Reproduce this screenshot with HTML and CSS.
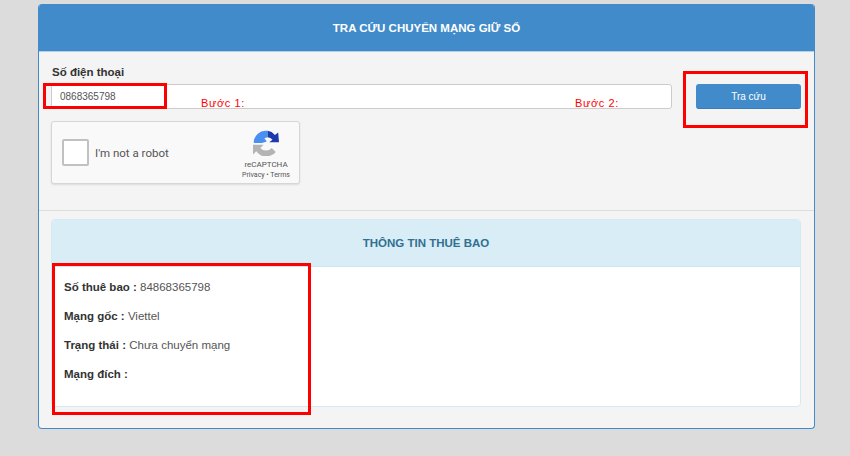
FILE: index.html
```html
<!DOCTYPE html>
<html lang="vi">
<head>
  <meta charset="UTF-8" />
  <title>Tra cứu chuyển mạng giữ số</title>
  <link rel="stylesheet" href="styles.css">
</head>
<body>
  <div class="panel">
    <div class="panel-heading">TRA CỨU CHUYỂN MẠNG GIỮ SỐ</div>

    <!-- form tra cứu -->
    <div class="search-form">
      <div class="form-row">
        <div class="field">
          <label class="field-label">Số điện thoại</label>
          <div class="field-input">0868365798</div>
        </div>
        <button class="btn-search">Tra cứu</button>
      </div>

      <div class="captcha">
        <span class="captcha-check"></span>
        <span class="captcha-text">I'm not a robot</span>
        <div class="captcha-brand">
          <svg class="captcha-logo" viewBox="0 0 64 64" width="26" height="26">
            <path d="M0 36 L26 36 L18 44 A18 18 0 0 0 46 44 L56 54 A30 30 0 0 1 8 52 L0 60 Z" fill="#b4b4b4"/>
            <path d="M2 32 L2 26 A30 30 0 0 1 30 2 L36 2 L36 18 L28 20 L34 28 L22 32 Z" fill="#4a90f0"/>
            <path d="M36 2 A30 30 0 0 1 54 12 L62 6 L64 30 L40 30 L48 24 A18 18 0 0 0 36 18 Z" fill="#1c3aa9"/>
          </svg>
          <div class="captcha-name">reCAPTCHA</div>
          <div class="captcha-links">Privacy • Terms</div>
        </div>
      </div>
    </div>

    <!-- thông tin thuê bao -->
    <div class="result-wrap">
      <div class="result">
        <div class="result-heading">THÔNG TIN THUÊ BAO</div>
        <div class="result-body">
          <p class="result-row"><b>Số thuê bao :</b> 84868365798</p>
          <p class="result-row"><b>Mạng gốc :</b> Viettel</p>
          <p class="result-row"><b>Trạng thái :</b> Chưa chuyển mạng</p>
          <p class="result-row"><b>Mạng đích :</b></p>
        </div>
      </div>
    </div>
  </div>

  <!-- chú thích vẽ đè lên ảnh -->
  <div class="mark mark-phone"></div>
  <div class="mark mark-button"></div>
  <div class="mark mark-info"></div>
  <span class="step step-1">Bước 1:</span>
  <span class="step step-2">Bước 2:</span>
</body>
</html>
```

FILE: styles.css
```css
html, body {
  margin: 0;
  padding: 0;
  height: 456px;
  overflow: hidden;
  background: #dcdcdc;
  font-family: "Liberation Sans", Arial, sans-serif;
  font-size: 11.5px;
  color: #555;
}

body {
  position: relative;
  padding-top: 4px;
  box-sizing: border-box;
}

/* khung chính */
.panel {
  width: 777px;
  height: 425px;
  margin-left: 38px;
  box-sizing: border-box;
  background: #f4f4f4;
  border: 1px solid #428bca;
  border-top: none;
  border-radius: 4px;
  overflow: hidden;
}

.panel-heading {
  height: 48px;
  line-height: 48px;
  text-align: center;
  font-weight: bold;
  color: #fff;
  background: #428bca;
  border-bottom: 1px solid #b5cfe6;
  box-sizing: border-box;
}

.search-form {
  height: 159px;
  box-sizing: border-box;
  padding: 12px 13px 0 12px;
  border-bottom: 1px solid #ddd;
}

.form-row {
  display: flex;
  align-items: flex-end;
  gap: 24px;
}

.field {
  flex: 1;
}

.field-label {
  display: block;
  height: 20px;
  line-height: 16px;
  padding-left: 1px;
  font-weight: bold;
  color: #333;
}

.field-input {
  height: 25px;
  line-height: 23px;
  box-sizing: border-box;
  padding-left: 8px;
  background: #fff;
  border: 1px solid #ccc;
  border-radius: 3px;
  font-size: 10px;
}

.btn-search {
  width: 105px;
  height: 25px;
  padding: 0;
  border: none;
  border-bottom: 1px solid #3a7cb5;
  border-radius: 3px;
  background: #428bca;
  color: #fff;
  font-family: inherit;
  font-size: 10px;
}

/* recaptcha */
.captcha {
  width: 249px;
  height: 63px;
  margin-top: 12px;
  box-sizing: border-box;
  display: flex;
  align-items: center;
  background: #f9f9f9;
  border: 1px solid #d6d6d6;
  border-radius: 3px;
  box-shadow: 0 1px 2px rgba(0, 0, 0, 0.1);
}

.captcha-check {
  width: 23px;
  height: 23px;
  margin-left: 10px;
  background: #fff;
  border: 2px solid #c1c1c1;
  border-radius: 2px;
}

.captcha-text {
  margin-left: 6px;
  font-family: Roboto, sans-serif;
  color: #555;
}

.captcha-brand {
  margin-left: auto;
  width: 54px;
  margin-right: 6px;
  padding-top: 6px;
  text-align: center;
  font-family: Roboto, sans-serif;
  color: #555;
}

.captcha-logo {
  display: block;
  margin: 0 auto 3px;
}

.captcha-name {
  font-size: 8px;
  line-height: 11px;
}

.captcha-links {
  font-size: 7px;
  line-height: 11px;
  white-space: nowrap;
}

/* kết quả */
.result-wrap {
  padding: 8px 13px 0 12px;
}

.result {
  height: 188px;
  box-sizing: border-box;
  background: #fff;
  border: 1px solid #d6e9f3;
  border-radius: 4px;
  overflow: hidden;
}

.result-heading {
  height: 47px;
  line-height: 46px;
  text-align: center;
  font-weight: bold;
  color: #31708f;
  background: #d9edf7;
  border-bottom: 1px solid #cde5f1;
  box-sizing: border-box;
}

.result-body {
  padding: 13px 12px 0;
}

.result-row {
  margin: 0 0 14px;
  height: 15px;
  line-height: 15px;
}

.result-row b {
  color: #333;
}

/* chú thích màu đỏ */
.mark {
  position: absolute;
  box-sizing: border-box;
  border: 3px solid #f00;
}

.mark-phone {
  left: 43px;
  top: 83px;
  width: 124px;
  height: 26px;
}

.mark-button {
  left: 683px;
  top: 71px;
  width: 125px;
  height: 57px;
}

.mark-info {
  left: 52px;
  top: 263px;
  width: 259px;
  height: 152px;
}

.step {
  position: absolute;
  top: 97px;
  font-size: 11px;
  line-height: 13px;
  letter-spacing: 0.6px;
  color: #f00;
}

.step-1 {
  left: 201px;
}

.step-2 {
  left: 575px;
}
```
